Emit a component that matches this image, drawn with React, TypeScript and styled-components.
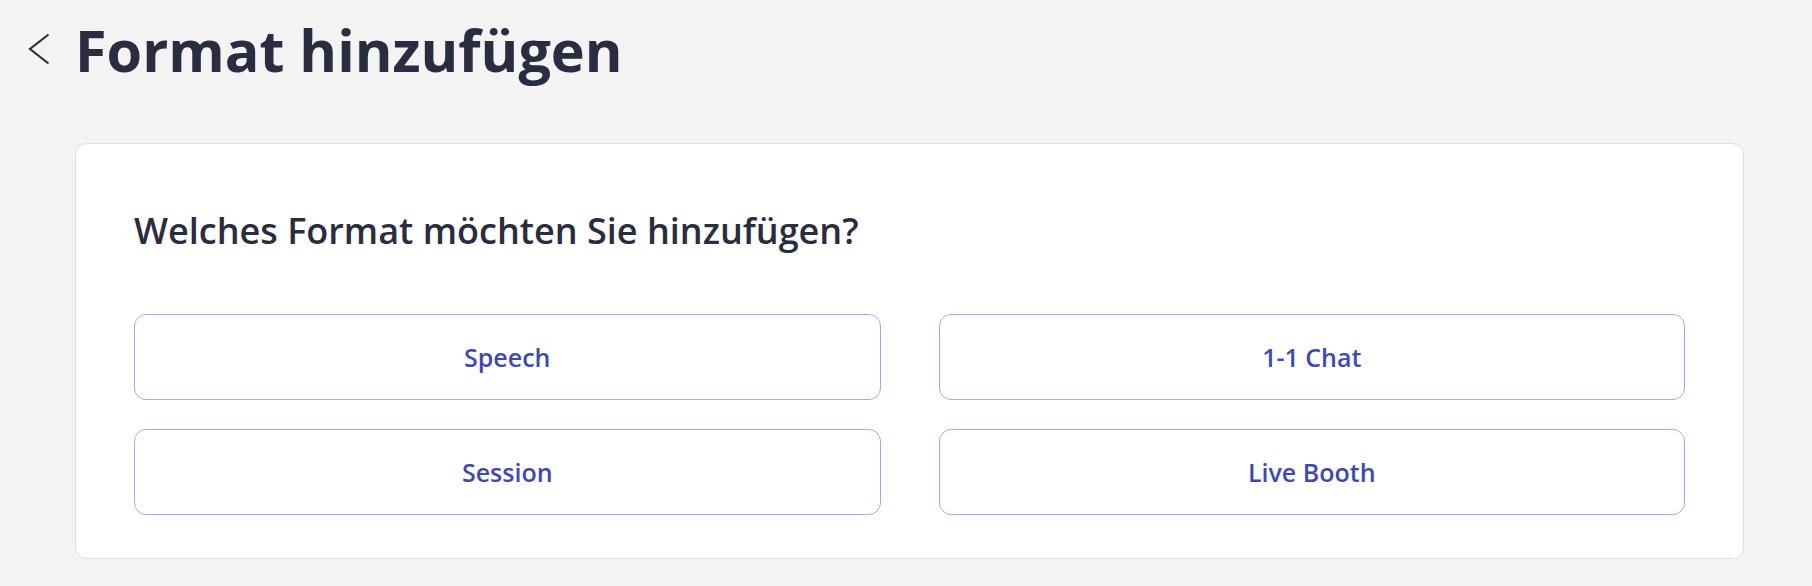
import React from "react";
import styled, { createGlobalStyle } from "styled-components";

const formats = ["Speech", "1-1 Chat", "Session", "Live Booth"];

const App = () => {
  return (
    <Page>
      <GlobalStyle />
      <Header>
        <BackButton type="button" aria-label="Zurück">
          <svg width="22" height="32" viewBox="0 0 22 32" fill="none">
            <path d="M20.5 1.5 L2 16 L20.5 30.5" stroke="#2e2f3a" strokeWidth="2.2" />
          </svg>
        </BackButton>
        <Title>Format hinzufügen</Title>
      </Header>
      <Card>
        <Question>Welches Format möchten Sie hinzufügen?</Question>
        <Options>
          {formats.map((f) => (
            <Option key={f} type="button">
              {f}
            </Option>
          ))}
        </Options>
      </Card>
    </Page>
  );
};

const GlobalStyle = createGlobalStyle`
  html, body {
    margin: 0;
    padding: 0;
    background: #f3f3f3;
    font-family: "Open Sans", "Noto Sans", sans-serif;
  }
`;

const Page = styled.main`
  min-height: 586px;
  padding: 16px 68px 0 75px;
  box-sizing: border-box;
`;

const Header = styled.header`
  display: flex;
  align-items: center;
  gap: 25px;
  margin-left: -47px;
`;

const BackButton = styled.button`
  display: flex;
  align-items: center;
  justify-content: center;
  width: 22px;
  height: 40px;
  padding: 0;
  border: none;
  background: none;
  cursor: pointer;
  margin-top: -2px;
`;

const Title = styled.h1`
  margin: 0;
  font-size: 57.5px;
  line-height: 68px;
  font-weight: 700;
  color: #2a2c40;
`;

const Card = styled.section`
  margin-top: 59px;
  background: #fff;
  border: 1px solid #dedede;
  border-radius: 12px;
  padding: 63px 58px 43px 58px;
`;

const Question = styled.h2`
  margin: 0 0 59px;
  font-size: 36px;
  line-height: 48px;
  font-weight: 600;
  color: #2a2c40;
`;

const Options = styled.div`
  display: grid;
  grid-template-columns: 1fr 1fr;
  column-gap: 58px;
  row-gap: 29px;
`;

const Option = styled.button`
  height: 86px;
  background: #fff;
  border: 1px solid #a5abe8;
  border-radius: 12px;
  font-family: "Open Sans", "Noto Sans", sans-serif;
  font-size: 25px;
  font-weight: 600;
  color: #3f4aab;
  cursor: pointer;

  &:hover {
    background: #f7f7ff;
  }
`;

export default App;
